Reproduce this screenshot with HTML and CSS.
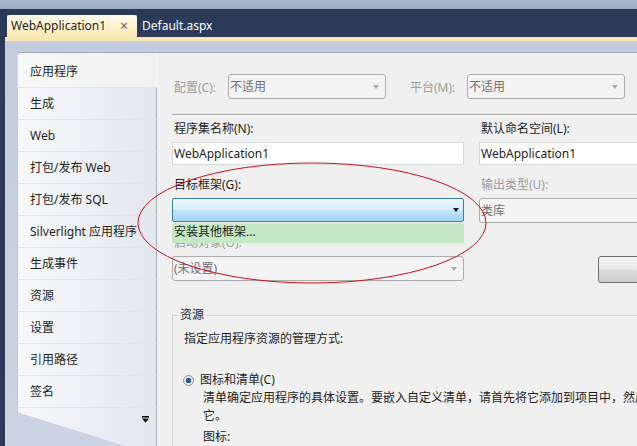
FILE: index.html
```html
<!DOCTYPE html>
<html lang="zh-CN">
<head>
    <meta charset="UTF-8">
    <title>WebApplication1 - 属性</title>
    <link rel="stylesheet" href="styles.css">
</head>
<body>
    <div class="top-strip"></div>
    <div class="doc-tabs">
        <div class="doc-tab active"><span>WebApplication1</span><span class="close">×</span></div>
        <div class="doc-tab">Default.aspx</div>
    </div>

    <div class="main">
        <div class="tab-accent"></div>
        <div class="workspace">
            <ul class="nav">
                <li class="active">应用程序</li>
                <li>生成</li>
                <li>Web</li>
                <li>打包/发布 Web</li>
                <li>打包/发布 SQL</li>
                <li>Silverlight 应用程序</li>
                <li>生成事件</li>
                <li>资源</li>
                <li>设置</li>
                <li>引用路径</li>
                <li>签名</li>
                <li class="more">
                    <svg width="7" height="7" viewBox="0 0 7 7"><rect x="0" y="0" width="7" height="1.6" fill="#111"/><path d="M0 2.6 H7 L3.5 6.8 Z" fill="#111"/></svg>
                </li>
            </ul>

            <div class="page">
                <div class="config-row">
                    <label class="muted">配置(C):</label>
                    <div class="select disabled">不适用</div>
                    <label class="muted platform">平台(M):</label>
                    <div class="select disabled">不适用</div>
                </div>
                <div class="separator"></div>

                <div class="fields">
                    <div class="field">
                        <label>程序集名称(N):</label>
                        <div class="textbox">WebApplication1</div>
                    </div>
                    <div class="field">
                        <label>默认命名空间(L):</label>
                        <div class="textbox">WebApplication1</div>
                    </div>
                    <div class="field target">
                        <label>目标框架(G):</label>
                        <div class="combo open"></div>
                        <div class="dropdown-list">安装其他框架...</div>
                    </div>
                    <div class="field">
                        <label class="muted">输出类型(U):</label>
                        <div class="select disabled">类库</div>
                    </div>
                    <div class="field">
                        <label class="muted">启动对象(O):</label>
                        <div class="select disabled">(未设置)</div>
                    </div>
                    <div class="field">
                        <label>&nbsp;</label>
                        <div class="button"></div>
                    </div>
                </div>

                <fieldset class="group">
                    <legend>资源</legend>
                    <div class="group-intro">指定应用程序资源的管理方式:</div>
                    <div class="radio-row"><span class="radio checked"></span>图标和清单(C)</div>
                    <div class="hint">清单确定应用程序的具体设置。要嵌入自定义清单，请首先将它添加到项目中，然后从以下列表中选择<br>它。</div>
                    <div class="hint icon-label">图标:</div>
                </fieldset>
            </div>
        </div>
    </div>

    <svg class="annotation" width="637" height="446">
        <ellipse cx="312" cy="223" rx="174" ry="60" fill="none" stroke="#cc1111" stroke-width="1"/>
    </svg>
</body>
</html>
```

FILE: styles.css
```css
body {
    margin: 0;
    width: 637px;
    height: 446px;
    overflow: hidden;
    position: relative;
    font-family: "Noto Sans", "Noto Sans CJK SC", sans-serif;
    font-size: 12px;
    color: #1e1e1e;
    background: #2a3a58;
}
.top-strip {
    height: 9px;
    background: linear-gradient(#aab7cd, #9dabc4);
}
.doc-tabs {
    height: 28px;
    display: flex;
    align-items: flex-end;
    padding-left: 7px;
    box-sizing: border-box;
    background: #2a3a58;
}
.doc-tab {
    height: 22px;
    line-height: 22px;
    padding: 0 6px 0 5px;
    color: #fff;
}
.doc-tab.active {
    width: 130px;
    box-sizing: border-box;
    display: flex;
    justify-content: space-between;
    padding: 0 9px 0 4px;
    color: #1e1e1e;
    border-radius: 2px 2px 0 0;
    background: linear-gradient(#fffcef, #fdf2cf 50%, #fbeab6);
}
.doc-tab .close {
    color: #666;
    font-size: 14px;
}

.main {
    margin-left: 5px;
}
.tab-accent {
    height: 4px;
    background: #f7e7b3;
}
.workspace {
    height: 405px;
    box-sizing: border-box;
    display: flex;
    padding-top: 11px;
    background: linear-gradient(#c2ccdd, #cbd4e3);
}

.nav {
    width: 140px;
    flex: none;
    margin: 0 0 0 12px;
    padding: 0;
    list-style: none;
}
.nav li {
    height: 32px;
    line-height: 31px;
    box-sizing: border-box;
    padding-left: 12px;
    white-space: nowrap;
    border-left: 1px solid #c3cad6;
    border-right: 1px solid #a7aebb;
    border-bottom: 1px solid #e2e5eb;
    background: linear-gradient(to right, #f7f8fa, #e3e7ee);
}
.nav li.active {
    height: 36px;
    padding-top: 4px;
    line-height: 30px;
    border-top: 1px solid #a3aab8;
    border-left-color: #ecd9a6;
    border-right-color: transparent;
    border-radius: 4px 0 0 0;
    background: linear-gradient(to right, #f8f8f8, #f0f0f0);
}
.nav li.more {
    height: 38px;
    border-bottom: none;
    display: flex;
    justify-content: flex-end;
    align-items: flex-start;
    padding: 8px 7px 0 0;
    clip-path: polygon(0 0, 100% 0, 100% 100%, 108px 100%, 0 4px);
}

.page {
    flex: 1;
    min-width: 0;
    overflow: hidden;
    padding: 21px 0 0 15px;
    border-top: 1px solid #9ea6b5;
    background: #f0f0f0;
}
.muted {
    color: #9d9d9d;
}
.config-row {
    display: flex;
    align-items: center;
    height: 25px;
}
.config-row label {
    width: 56px;
    box-sizing: border-box;
    padding-left: 2px;
}
.config-row label.platform {
    width: 59px;
    margin-left: 22px;
}
.config-row .select {
    width: 158px;
}
.select {
    position: relative;
    height: 25px;
    line-height: 23px;
    box-sizing: border-box;
    padding-left: 1px;
    border: 1px solid #adadad;
    border-radius: 3px;
    background: #f4f4f4;
    color: #6f6f6f;
}
.select::after {
    content: "";
    position: absolute;
    right: 6px;
    top: 10px;
    border-left: 3.5px solid transparent;
    border-right: 3.5px solid transparent;
    border-top: 4px solid #a9a9a9;
}
.separator {
    height: 1px;
    margin-top: 15px;
    background: #a3a3a3;
    box-shadow: 0 1px 0 #fff;
}

.fields {
    display: grid;
    grid-template-columns: 292px 292px;
    column-gap: 15px;
    row-gap: 12px;
    margin-top: 6px;
}
.field {
    position: relative;
}
.field label {
    display: block;
    height: 16px;
    line-height: 16px;
    margin-bottom: 5px;
    padding-left: 2px;
}
.textbox {
    height: 23px;
    line-height: 21px;
    box-sizing: border-box;
    padding-left: 1px;
    border: 1px solid #dadada;
    background: #fff;
}
.combo.open {
    position: relative;
    height: 24px;
    box-sizing: border-box;
    border: 1px solid #3c7db0;
    border-radius: 2px;
    background: linear-gradient(#ecf7fd, #d9f0fc 48%, #bfe5fa 52%, #a3d5f3);
}
.combo.open::after {
    content: "";
    position: absolute;
    right: 4px;
    top: 9px;
    border-left: 3.5px solid transparent;
    border-right: 3.5px solid transparent;
    border-top: 4px solid #111;
}
.dropdown-list {
    position: absolute;
    top: 100%;
    left: 0;
    z-index: 1;
    width: 292px;
    height: 20px;
    line-height: 18px;
    box-sizing: border-box;
    padding-left: 2px;
    background: #c5e8c5;
}
.button {
    width: 120px;
    height: 27px;
    margin-left: 119px;
    box-sizing: border-box;
    border: 1px solid #707070;
    border-radius: 3px;
    background: linear-gradient(#f3f3f3, #ebebeb 48%, #dddddd 52%, #cfcfcf);
}

.group {
    width: 600px;
    margin: 24px 0 0 0;
    padding: 8px 0 0 11px;
    border: 1px solid #d3d3d3;
    min-width: 0;
}
.group legend {
    line-height: 16px;
    padding: 0 2px;
    margin-left: -6px;
}
.group-intro {
    line-height: 16px;
}
.radio-row {
    display: flex;
    align-items: center;
    margin: 24px 0 0 -1px;
    line-height: 18px;
}
.radio {
    width: 11px;
    height: 11px;
    margin-right: 6px;
    box-sizing: border-box;
    border: 1px solid #8e8f8f;
    border-radius: 50%;
    background: radial-gradient(circle, #2f6fb0 0, #174c86 2.5px, #e4e4e4 3px, #f4f4f4 5px);
}
.hint {
    padding-left: 19px;
    line-height: 18px;
    white-space: nowrap;
}
.icon-label {
    margin-top: 3px;
}

.annotation {
    position: absolute;
    left: 0;
    top: 0;
    pointer-events: none;
}
```
